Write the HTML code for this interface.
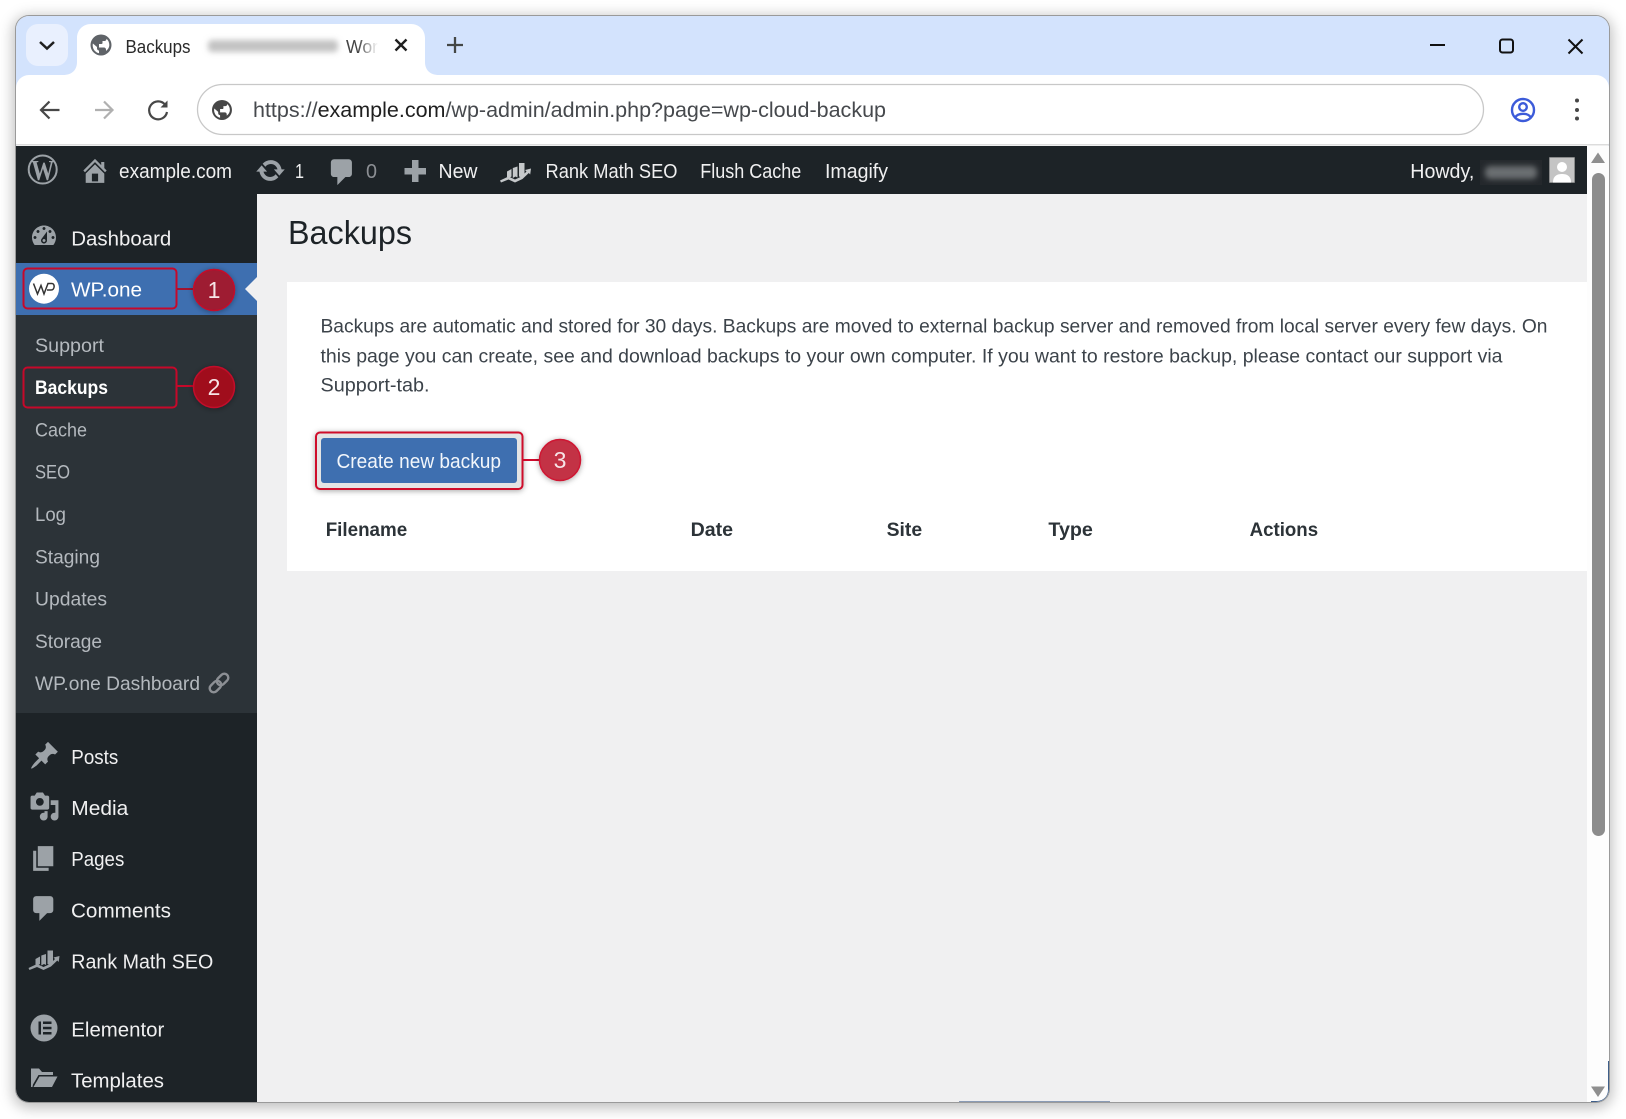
<!DOCTYPE html>
<html lang="en"><head><meta charset="utf-8"><title>Backups</title>
<style>
html,body{margin:0;padding:0;background:#fff;width:1626px;height:1119px;overflow:hidden}
#win{position:absolute;left:16px;top:16px;width:1593px;height:1086px;border-radius:13px;box-shadow:0 0 0 1px #9a9a9a,0 3px 14px 3px rgba(0,0,0,.26)}
svg{position:absolute;left:0;top:0}
text{font-family:"Liberation Sans",Arial,sans-serif}
.side{font-size:20.5px;fill:#f0f0f1}
.sub{font-size:19.5px;fill:#b4b9be}
.bar{font-size:20px;fill:#f0f0f1}
.para{font-size:19.5px;fill:#3c434a}
.th{font-size:19.5px;font-weight:bold;fill:#2c3338}
.num{font-size:23px;fill:#f6e4e7;text-anchor:middle}
</style></head>
<body>
<div id="win"></div>
<svg width="1626" height="1119" viewBox="0 0 1626 1119" xmlns="http://www.w3.org/2000/svg">
<defs>
<clipPath id="wc"><rect x="16" y="16" width="1593" height="1086" rx="13"/></clipPath>
<linearGradient id="fade" x1="0" x2="1" y1="0" y2="0"><stop offset="0" stop-color="#fff" stop-opacity="0"/><stop offset="1" stop-color="#fff"/></linearGradient>
<filter id="b5" x="-20%" y="-100%" width="140%" height="300%"><feGaussianBlur stdDeviation="3"/></filter>
<filter id="sh" x="-30%" y="-30%" width="160%" height="160%"><feDropShadow dx="0" dy="1" stdDeviation="3" flood-color="#000" flood-opacity=".35"/></filter>
<g id="rank">
<path d="M7 9.500 11.500 7V14.500L9 16 7 15ZM12.800 6 17.500 4.500V15.500L15.500 14.500 12.800 16ZM19 1H24.500V14L21.500 15.500 19 14.500Z"/>
<path d="M0 18.500 8.500 14.500 15 17.500 21.500 14.500 26.500 9.500 25 8 31 6.500 30.200 12.500 28.800 11 22.500 17 15 20.500 8.500 17.500 1 20.500Z"/>
</g>
<g id="globe"><path fill-rule="evenodd" d="M10.500 0A10.500 10.500 0 1 0 10.500 21 10.500 10.500 0 0 0 10.500 0ZM2.400 9 6.500 12.500V14C6.500 15.100 7.400 16 8.500 16V18.700C4.900 17.900 2.200 14.700 2.200 10.700 2.200 10.100 2.300 9.500 2.400 9ZM15.500 16.400V15C15.500 13.900 14.600 13 13.500 13H8.500V9.500H11C11.600 9.500 12 9.100 12 8.500V6.500H14C15.100 6.500 16 5.600 16 4.500V4.200C17.800 5.700 18.800 8 18.800 10.500 18.800 12.900 17.500 15 15.500 16.400Z"/></g>
</defs>

<g clip-path="url(#wc)">
<!-- Chrome frame -->
<rect x="16" y="16" width="1593" height="1086" fill="#d3e3fd"/>
<rect x="16" y="75" width="1593" height="80" rx="13" fill="#fff"/>
<rect x="16" y="144" width="1593" height="1.500" fill="#dcdcdc"/>
<rect x="26" y="24" width="42" height="42" rx="12" fill="#e9f0fe"/>
<path d="M40 42 47 48.500 54 42" fill="none" stroke="#1f1f1f" stroke-width="2.500"/>
<path d="M63 75C72 75 77 70 77 62V38C77 30 83 24 91 24H411C419 24 425 30 425 38V62C425 70 430 75 439 75Z" fill="#fff"/>
<use href="#globe" x="90.500" y="34.500" fill="#5f6368"/>
<text x="125.500" y="53" font-size="18.500" textLength="65" lengthAdjust="spacingAndGlyphs" fill="#2a2a2a">Backups</text>
<rect x="208" y="40" width="130" height="12" rx="4" fill="#c2c2c2" filter="url(#b5)"/>
<text x="346" y="53" font-size="18.500" textLength="32" lengthAdjust="spacingAndGlyphs" fill="#444">Wor</text>
<rect x="358" y="30" width="20" height="30" fill="url(#fade)"/>
<path d="M395.500 39.500 406.500 50.500M406.500 39.500 395.500 50.500" stroke="#1f1f1f" stroke-width="2.400"/>
<path d="M455 37V53M447 45H463" stroke="#444746" stroke-width="2.300"/>
<path d="M1430 45H1445" stroke="#111" stroke-width="2"/>
<rect x="1500" y="39.500" width="13" height="13" rx="2.500" fill="none" stroke="#111" stroke-width="2"/>
<path d="M1568.500 39.500 1582.500 53.500M1582.500 39.500 1568.500 53.500" stroke="#111" stroke-width="2"/>
<!-- Toolbar -->
<path d="M59.500 110H41.500M49.500 101.500 41 110 49.500 118.500" fill="none" stroke="#474747" stroke-width="2.200"/>
<path d="M95 110H112M104 101.500 112.500 110 104 118.500" fill="none" stroke="#b0b0b0" stroke-width="2.200"/>
<path d="M165 104.500A9 9 0 1 0 167 112" fill="none" stroke="#474747" stroke-width="2.200"/>
<path d="M167.500 100.500V107.500H160.500Z" fill="#474747"/>
<rect x="197.500" y="84.500" width="1286" height="50" rx="25" fill="#fff" stroke="#c8c8c8" stroke-width="1.300"/>
<g transform="translate(212 100) scale(.95)" fill="#474747"><use href="#globe"/></g>
<text x="253" y="117" font-size="21.500" textLength="633" lengthAdjust="spacingAndGlyphs" fill="#46494d"><tspan>https://</tspan><tspan fill="#1f1f1f">example.com</tspan><tspan>/wp-admin/admin.php?page=wp-cloud-backup</tspan></text>
<g fill="none" stroke="#3c5bd9" stroke-width="2.400"><circle cx="1523" cy="110" r="11"/><circle cx="1523" cy="107" r="3.800"/><path d="M1515 117.500C1517 114.500 1520 113.800 1523 113.800S1529 114.500 1531 117.500"/></g>
<circle cx="1577" cy="100.500" r="2" fill="#474747"/><circle cx="1577" cy="110" r="2" fill="#474747"/><circle cx="1577" cy="118.500" r="2" fill="#474747"/>

<!-- Page -->
<rect x="16" y="146" width="1571" height="956" fill="#f0f0f1"/>
<rect x="1587" y="146" width="22" height="956" fill="#fdfdfd"/>
<path d="M1598 152.500 1605 163H1591Z" fill="#8f8f8f"/>
<rect x="1592" y="173" width="13" height="663" rx="6.500" fill="#8c8c8c"/>
<path d="M1591 1086.500H1605L1598 1097Z" fill="#8f8f8f"/>
<path d="M1608.500 1061V1090C1608.500 1096 1604 1101.500 1597 1101.500H1591" fill="none" stroke="#3f5f8a" stroke-width="1"/>
<path d="M959 1101.500H1110" stroke="#8a9bb5" stroke-width="1"/>
<!-- Sidebar -->
<rect x="16" y="194" width="241" height="908" fill="#1d2327"/>
<rect x="16" y="315" width="241" height="398" fill="#2c3338"/>
<rect x="16" y="263" width="241" height="52" fill="#3e6fb0"/>
<path d="M245 289 257 277V301Z" fill="#f0f0f1"/>
<!-- Admin bar -->
<rect x="16" y="146" width="1571" height="48" fill="#1d2327"/>
<g fill="#9ca2a7">
<circle cx="42.700" cy="169.500" r="14" fill="none" stroke="#9ca2a7" stroke-width="2"/>
<text x="42.700" y="180" font-size="29" font-weight="bold" text-anchor="middle" textLength="23" lengthAdjust="spacingAndGlyphs" style='font-family:"Liberation Serif",serif'>W</text>
<g transform="translate(79.500 155) scale(1.550)"><path d="M16 8.500l1.530 1.530-1.060 1.060L10 4.620l-6.470 6.470-1.060-1.060L10 2.500l4 4v-2h2v4zm-6-2.460l6 5.990V18H4v-5.970zM12 17v-5H8v5h4z" fill-rule="evenodd"/></g>
<g transform="translate(255 155) scale(1.550)"><path d="M10.200 3.280c3.530 0 6.430 2.610 6.920 6h2.080l-3.500 4-3.500-4h2.320c-.45-1.970-2.210-3.450-4.320-3.450-1.450 0-2.730.71-3.540 1.780L4.950 5.660C6.230 4.200 8.110 3.280 10.200 3.280zm-.4 13.440c-3.520 0-6.430-2.610-6.920-6H.8l3.500-4c1.170 1.330 2.330 2.670 3.500 4H5.480c.45 1.970 2.210 3.450 4.320 3.450 1.450 0 2.730-.71 3.540-1.780l1.710 1.950c-1.280 1.460-3.150 2.380-5.250 2.380z"/></g>
<g transform="translate(326 156) scale(1.620)"><path d="M5 2h9c1.100 0 2 .9 2 2v7c0 1.100-.9 2-2 2h-2l-5 5v-5H5c-1.100 0-2-.9-2-2V4c0-1.100.9-2 2-2z"/></g>
<path d="M412 160H418.500V168H426V174.500H418.500V182H412V174.500H404.500V168H412Z"/>
</g>
<g transform="translate(500 162)" fill="#c5c8ca"><use href="#rank"/></g>
<text class="bar" x="119" y="178" textLength="113" lengthAdjust="spacingAndGlyphs">example.com</text>
<text class="bar" x="295" y="178" textLength="9" lengthAdjust="spacingAndGlyphs">1</text>
<text class="bar" x="366" y="178" textLength="11" lengthAdjust="spacingAndGlyphs" style="fill:#8c8f94">0</text>
<text class="bar" x="438.500" y="178" textLength="39" lengthAdjust="spacingAndGlyphs">New</text>
<text class="bar" x="545.500" y="178" textLength="132" lengthAdjust="spacingAndGlyphs">Rank Math SEO</text>
<text class="bar" x="700.300" y="178" textLength="101" lengthAdjust="spacingAndGlyphs">Flush Cache</text>
<text class="bar" x="825" y="178" textLength="63" lengthAdjust="spacingAndGlyphs">Imagify</text>
<text class="bar" x="1410.300" y="178" textLength="64" lengthAdjust="spacingAndGlyphs">Howdy,</text>
<rect x="1480" y="160" width="62" height="25" fill="#24282c"/>
<rect x="1485" y="166" width="52" height="13" rx="5" fill="#6b6e71" filter="url(#b5)"/>
<rect x="1549.500" y="157.500" width="25" height="25" fill="#c4c4c4" stroke="#9a9a9a" stroke-width=".6"/>
<circle cx="1562" cy="167" r="5" fill="#fff"/><path d="M1553 182.500C1553 176 1557 174 1562 174S1571 176 1571 182.500Z" fill="#fff"/>

<!-- Sidebar icons -->
<g fill="#9ca2a7">
<g transform="translate(29 221) scale(1.500)"><path fill-rule="evenodd" d="M3.760 16h12.480c1.100-1.370 1.760-3.110 1.760-5 0-4.420-3.580-8-8-8s-8 3.580-8 8c0 1.890.66 3.630 1.760 5zM10 4c.55 0 1 .45 1 1s-.45 1-1 1-1-.45-1-1 .45-1 1-1zM6 6c.55 0 1 .45 1 1s-.45 1-1 1-1-.45-1-1 .45-1 1-1zm8 0c.55 0 1 .45 1 1s-.45 1-1 1-1-.45-1-1 .45-1 1-1zm-5.370 5.550L12 7v6c0 1.100-.9 2-2 2s-2-.9-2-2c0-.57.24-1.080.63-1.450zM4 10c.55 0 1 .45 1 1s-.45 1-1 1-1-.45-1-1 .45-1 1-1zm12 0c.55 0 1 .45 1 1s-.45 1-1 1-1-.45-1-1 .45-1 1-1zm-5 3c0-.55-.45-1-1-1s-1 .45-1 1 .45 1 1 1 1-.45 1-1z"/></g>
<g transform="translate(29 740) scale(1.550)"><path d="M10.440 3.020l1.820-1.820 6.360 6.350-1.830 1.820c-1.050-.68-2.480-.57-3.410.36l-.75.75c-.92.93-1.040 2.350-.35 3.410l-1.830 1.820-2.410-2.410-2.800 2.790c-.42.42-3.380 2.710-3.800 2.290s1.860-3.390 2.280-3.810l2.790-2.790L4.100 9.360l1.830-1.820c1.050.69 2.480.57 3.400-.36l.75-.75c.93-.92 1.050-2.350.36-3.410z"/></g>
<g transform="translate(29 791) scale(1.550)"><path fill-rule="evenodd" d="M13 11V4c0-.55-.45-1-1-1h-1.670L9 1H5L3.670 3H2c-.55 0-1 .45-1 1v7c0 .55.45 1 1 1h10c.55 0 1-.45 1-1zM7 4.500c1.380 0 2.500 1.120 2.500 2.500S8.380 9.500 7 9.500 4.500 8.380 4.500 7 5.620 4.500 7 4.500zM14 6h5v10.500c0 1.380-1.120 2.500-2.500 2.500S14 17.880 14 16.500s1.120-2.500 2.500-2.500c.17 0 .34.020.5.05V9h-3V6zm-4 8.050V13h2v3.500c0 1.380-1.120 2.500-2.500 2.500S7 17.880 7 16.500 8.120 14 9.500 14c.17 0 .34.020.5.05z"/></g>
<g transform="translate(28.500 843) scale(1.550)"><path d="M6 15V2h10v13H6zm-1 1h8v2H3V5h2v11z"/></g>
<g transform="translate(28.500 893) scale(1.550)"><path d="M5 2h9c1.100 0 2 .9 2 2v7c0 1.100-.9 2-2 2h-2l-5 5v-5H5c-1.100 0-2-.9-2-2V4c0-1.100.9-2 2-2z"/></g>
<g transform="translate(28.500 949.500)"><use href="#rank"/></g>
<circle cx="44" cy="1028" r="13.500"/>
<path d="M31 1087V1068.500H39L42 1072H53V1075H38.500L33 1084.500 32.500 1087ZM39.500 1076.500H57.500L52 1087H33.500Z" fill-rule="evenodd"/>
</g>
<g fill="#1d2327"><rect x="38.500" y="1021.500" width="2.500" height="13"/><rect x="43" y="1021.500" width="8.500" height="2.500"/><rect x="43" y="1026.800" width="8.500" height="2.500"/><rect x="43" y="1032" width="8.500" height="2.500"/></g>
<g transform="rotate(-45 219 683)" fill="none" stroke="#8c8f94" stroke-width="2.400"><rect x="207.500" y="679" width="13" height="8" rx="4"/><rect x="217.500" y="679" width="13" height="8" rx="4"/></g>

<!-- Sidebar text -->
<text class="side" x="71.300" y="245.600" textLength="100" lengthAdjust="spacingAndGlyphs">Dashboard</text>
<text class="side" x="71" y="296.700" textLength="71" lengthAdjust="spacingAndGlyphs" style="fill:#fff">WP.one</text>
<text class="sub" x="35" y="352" textLength="69" lengthAdjust="spacingAndGlyphs">Support</text>
<text class="sub" x="35" y="394" textLength="73" lengthAdjust="spacingAndGlyphs" style="fill:#fff;font-weight:bold">Backups</text>
<text class="sub" x="35" y="436.500" textLength="52" lengthAdjust="spacingAndGlyphs">Cache</text>
<text class="sub" x="35" y="478.500" textLength="35" lengthAdjust="spacingAndGlyphs">SEO</text>
<text class="sub" x="35" y="521" textLength="31" lengthAdjust="spacingAndGlyphs">Log</text>
<text class="sub" x="35" y="563.500" textLength="65" lengthAdjust="spacingAndGlyphs">Staging</text>
<text class="sub" x="35" y="605.500" textLength="72" lengthAdjust="spacingAndGlyphs">Updates</text>
<text class="sub" x="35" y="648" textLength="67" lengthAdjust="spacingAndGlyphs">Storage</text>
<text class="sub" x="35" y="690" textLength="165" lengthAdjust="spacingAndGlyphs">WP.one Dashboard</text>
<text class="side" x="71.300" y="764" textLength="47" lengthAdjust="spacingAndGlyphs">Posts</text>
<text class="side" x="71.300" y="815" textLength="57" lengthAdjust="spacingAndGlyphs">Media</text>
<text class="side" x="71.300" y="866" textLength="53" lengthAdjust="spacingAndGlyphs">Pages</text>
<text class="side" x="71" y="917.700" textLength="100" lengthAdjust="spacingAndGlyphs">Comments</text>
<text class="side" x="71.300" y="968.700" textLength="142" lengthAdjust="spacingAndGlyphs">Rank Math SEO</text>
<text class="side" x="71.300" y="1036.700" textLength="93" lengthAdjust="spacingAndGlyphs">Elementor</text>
<text class="side" x="71" y="1087.700" textLength="93" lengthAdjust="spacingAndGlyphs">Templates</text>

<!-- Content -->
<text x="288" y="244" font-size="33" textLength="124" lengthAdjust="spacingAndGlyphs" fill="#1d2327">Backups</text>
<rect x="287" y="282" width="1300" height="289" fill="#fff"/>
<text class="para" x="320.500" y="332.700" textLength="1227" lengthAdjust="spacingAndGlyphs">Backups are automatic and stored for 30 days. Backups are moved to external backup server and removed from local server every few days. On</text>
<text class="para" x="320.500" y="362.700" textLength="1182" lengthAdjust="spacingAndGlyphs">this page you can create, see and download backups to your own computer. If you want to restore backup, please contact our support via</text>
<text class="para" x="320.500" y="391.700" textLength="109" lengthAdjust="spacingAndGlyphs">Support-tab.</text>
<rect x="316" y="432.500" width="206.500" height="56.500" rx="4" fill="#e4e4e4" stroke="#cf0a2c" stroke-width="2" filter="url(#sh)"/>
<rect x="321" y="438" width="196" height="45" rx="3" fill="#3e6fb0"/>
<text x="336.500" y="468" font-size="20" textLength="164.500" lengthAdjust="spacingAndGlyphs" fill="#f2f6fb">Create new backup</text>
<text class="th" x="325.700" y="536" textLength="81.500" lengthAdjust="spacingAndGlyphs">Filename</text>
<text class="th" x="690.600" y="536" textLength="42.500" lengthAdjust="spacingAndGlyphs">Date</text>
<text class="th" x="886.600" y="536" textLength="35.500" lengthAdjust="spacingAndGlyphs">Site</text>
<text class="th" x="1048.400" y="536" textLength="44.500" lengthAdjust="spacingAndGlyphs">Type</text>
<text class="th" x="1249.600" y="536" textLength="68.500" lengthAdjust="spacingAndGlyphs">Actions</text>

<!-- Callouts -->
<rect x="23.500" y="268.500" width="153" height="40" rx="4" fill="none" stroke="#c7082a" stroke-width="2"/>
<path d="M177 289H193" stroke="#a2132f" stroke-width="2"/>
<circle cx="214" cy="290" r="20.500" fill="#9e1a33" stroke="#c30a2a" stroke-width="1.500" filter="url(#sh)"/>
<text class="num" x="214" y="298">1</text>
<rect x="23.500" y="367.500" width="153" height="40" rx="4" fill="none" stroke="#c7082a" stroke-width="2"/>
<path d="M177 386H193" stroke="#c7082a" stroke-width="2"/>
<circle cx="214" cy="387" r="20.500" fill="#a0091f" stroke="#c30a2a" stroke-width="1.500" filter="url(#sh)"/>
<text class="num" x="214" y="395">2</text>
<path d="M523 460H540" stroke="#cf0a2c" stroke-width="2"/>
<circle cx="560" cy="460" r="20.500" fill="#c33045" stroke="#cf1733" stroke-width="1.500" filter="url(#sh)"/>
<text class="num" x="560" y="468">3</text>
</g>
<!-- WP.one logo -->
<circle cx="44" cy="288.700" r="15" fill="#fff"/>
<path d="M33.500 283.500 37.500 294 41 285.500 44 294 48 283.500H52C55 283.500 55 290 51 290H47" fill="none" stroke="#333" stroke-width="1.500"/>
</svg>
</body></html>
